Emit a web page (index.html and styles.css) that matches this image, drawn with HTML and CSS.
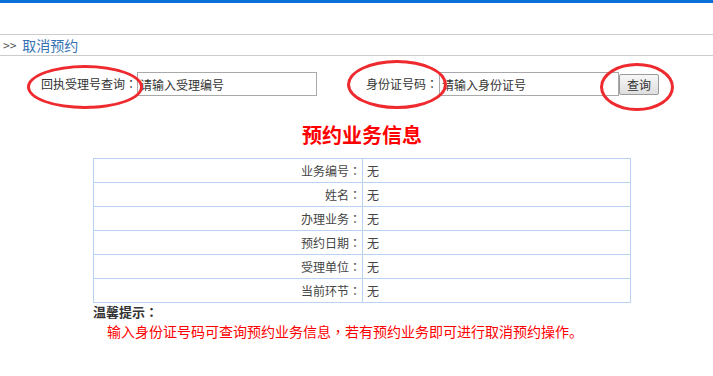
FILE: index.html
```html
<!DOCTYPE html>
<html lang="zh-CN">
<head>
<meta charset="utf-8">
<title>取消预约</title>
<link rel="stylesheet" href="styles.css">
</head>
<body>
<div class="topbar"></div>
<div class="crumb"><span class="arrow">&gt;&gt;</span><span class="crumb-link">取消预约</span></div>
<form class="search">
  <span class="lbl mark mark-a">回执受理号查询<span class="colon" lang="zh-TW">：</span></span>
  <input class="inp" type="text" value="请输入受理编号">
  <span class="lbl lbl-id mark mark-b">身份证号码<span class="colon" lang="zh-TW">：</span></span>
  <input class="inp" type="text" value="请输入身份证号">
  <span class="mark mark-c"><button class="btn" type="button">查询</button></span>
</form>
<div class="panel">
  <h1 class="title">预约业务信息</h1>
  <table class="info">
    <tr><th>业务编号<span class="colon" lang="zh-TW">：</span></th><td>无</td></tr>
    <tr><th>姓名<span class="colon" lang="zh-TW">：</span></th><td>无</td></tr>
    <tr><th>办理业务<span class="colon" lang="zh-TW">：</span></th><td>无</td></tr>
    <tr><th>预约日期<span class="colon" lang="zh-TW">：</span></th><td>无</td></tr>
    <tr><th>受理单位<span class="colon" lang="zh-TW">：</span></th><td>无</td></tr>
    <tr><th>当前环节<span class="colon" lang="zh-TW">：</span></th><td>无</td></tr>
  </table>
  <div class="tip-head">温馨提示<span class="colon" lang="zh-TW">：</span></div>
  <div class="tip">输入身份证号码可查询预约业务信息<span class="colon" lang="zh-TW">，</span>若有预约业务即可进行取消预约操作。</div>
</div>
</body>
</html>
```

FILE: styles.css
```css
* { box-sizing: border-box; }
html, body { margin: 0; padding: 0; background: #fff; }
body {
  font-family: "Noto Sans CJK SC", "Noto Sans", sans-serif;
  font-size: 12px;
  color: #333;
  text-spacing-trim: space-all;
}
.colon {
  font-family: "Noto Sans CJK TC", "Noto Sans CJK SC", sans-serif;
  text-spacing-trim: space-all;
}
.topbar {
  height: 3px;
  background: #0b6fd9;
  margin-bottom: 31px;
}
.crumb {
  height: 22px;
  border-top: 1px solid #cccccc;
  border-bottom: 1px solid #cccccc;
  padding-left: 3px;
  display: flex;
  align-items: center;
  font-size: 13px;
  line-height: 20px;
}
.arrow { color: #555; margin-right: 6px; font-size: 12px; }
.crumb-link { color: #3571b3; font-size: 14px; }
.search {
  height: 56px;
  margin: 0;
  padding-left: 41px;
  display: flex;
  align-items: center;
}
.lbl {
  font-size: 12px;
  color: #333;
  line-height: 24px;
  height: 24px;
  white-space: nowrap;
}
.inp {
  width: 180px;
  height: 24px;
  margin: 0;
  border: 1px solid #a9a9a9;
  padding: 0 0 0 2px;
  font-family: "Noto Sans CJK SC", sans-serif;
  font-size: 12px;
  color: #333;
  outline: none;
}
.lbl-id { margin-left: 49px; width: 73px; }
.btn {
  display: block;
  width: 40px;
  height: 21px;
  margin: 0;
  padding: 0;
  border: 1px solid #9a9a9a;
  border-radius: 2px;
  background: linear-gradient(#f7f7f7, #dedede);
  font-family: "Noto Sans CJK SC", sans-serif;
  font-size: 12px;
  color: #333;
}
.mark { position: relative; }
.mark::before {
  content: "";
  position: absolute;
  border: 3px solid #ee2a2f;
  border-radius: 50%;
  pointer-events: none;
}
.mark-a::before { left: -14px; top: -7px; width: 110px; height: 38px; }
.mark-b::before { left: -19px; top: -12px; width: 94px; height: 43px; }
.mark-c::before { left: -19px; top: -11px; width: 68px; height: 42px; }
.panel {
  width: 538px;
  margin-left: 93px;
  padding-top: 9px;
}
.title {
  margin: 0 0 9px;
  text-align: center;
  font-size: 20px;
  line-height: 28px;
  font-weight: bold;
  color: #ff0000;
}
.info {
  width: 538px;
  border-collapse: collapse;
}
.info th, .info td {
  height: 24px;
  border: 1px solid #b9d3f3;
  font-size: 12px;
  font-weight: normal;
  color: #444;
  padding: 0;
}
.info th {
  width: 269px;
  text-align: right;
  padding-right: 1px;
}
.info td { text-align: left; padding-left: 4px; }
.tip-head {
  font-size: 13px;
  font-weight: bold;
  line-height: 18px;
  color: #333;
}
.tip {
  padding-left: 14px;
  font-size: 14px;
  line-height: 20px;
  color: #ff0000;
}
```
